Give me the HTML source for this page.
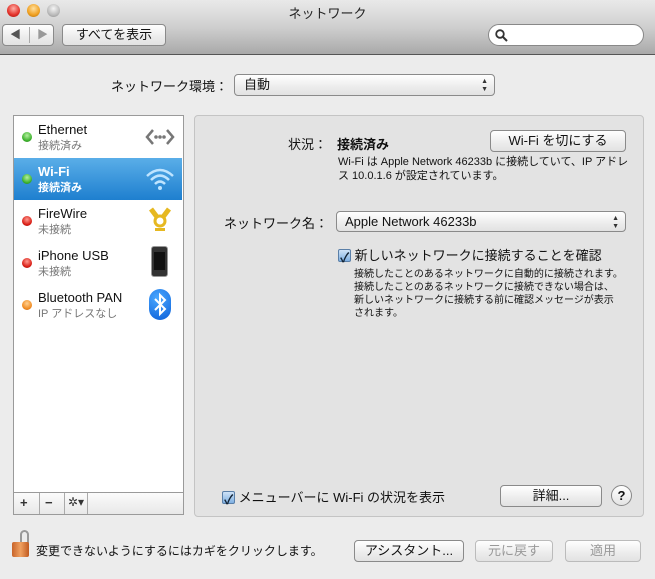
<!DOCTYPE html>
<html><head><meta charset="utf-8"><style>
*{margin:0;padding:0;box-sizing:border-box}
body{width:655px;height:579px;background:#ececec;font-family:"Liberation Sans","Noto Sans CJK JP",sans-serif;font-size:13px;color:#111;position:relative;overflow:hidden}
.a{position:absolute}
.tb{left:0;top:0;width:655px;height:55px;background:linear-gradient(#e9e9e9,#cfcfcf 50%,#a9a9a9);border-bottom:1px solid #555}
.btn{position:absolute;border:1px solid #8a8a8a;border-radius:4px;background:linear-gradient(#fff,#ececec 60%,#e2e2e2);text-align:center;font-size:13px;line-height:20px}
.dot{position:absolute;width:10px;height:10px;border-radius:50%;left:8px}
.row{position:absolute;left:0;width:168px;height:42px}
.n{position:absolute;left:24px;top:6px;font-size:13px}
.s{position:absolute;left:24px;top:21px;font-size:11px;color:#777}
.cb{display:inline-block;width:13px;height:13px;border:1px solid #5a7fa8;border-radius:2px;background:linear-gradient(#cfe3f7,#7fb0e2);vertical-align:-2px;position:relative}
</style></head><body>
<div class="a tb"></div>
<div class="a dot" style="left:7px;top:4px;width:13px;height:13px;background:radial-gradient(circle at 50% 35%,#ffb0a8,#e3322a 60%,#9b1a14)"></div>
<div class="a dot" style="left:27px;top:4px;width:13px;height:13px;background:radial-gradient(circle at 50% 35%,#ffe0a0,#f0a020 60%,#a86a10)"></div>
<div class="a dot" style="left:47px;top:4px;width:13px;height:13px;background:radial-gradient(circle at 50% 35%,#f5f5f5,#bbb 60%,#888)"></div>
<div class="a" style="left:0;top:3px;width:655px;text-align:center;font-size:13px;color:#222">ネットワーク</div>
<div class="btn" style="left:2px;top:24px;width:52px;height:22px;color:#555;font-size:11px"><span style="position:absolute;left:7px">◀</span><span style="position:absolute;left:26px;top:2px;height:16px;border-left:1px solid #aaa"></span><span style="position:absolute;left:34px;color:#999">▶</span></div>
<div class="btn" style="left:62px;top:24px;width:104px;height:22px">すべてを表示</div>
<div class="a" style="left:488px;top:24px;width:156px;height:22px;border:1px solid #888;border-radius:11px;background:#fff"><svg class="a" style="left:6px;top:4px" width="13" height="13"><circle cx="5" cy="5" r="3.8" fill="none" stroke="#333" stroke-width="1.8"/><line x1="8" y1="8" x2="12" y2="12" stroke="#333" stroke-width="2"/></svg></div>
<div class="a" style="left:111px;top:76px">ネットワーク環境：</div>
<div class="btn" style="left:234px;top:74px;width:261px;height:22px;text-align:left;padding-left:9px">自動<span style="position:absolute;right:6px;top:0;font-size:7px;line-height:8px;top:3px;color:#333">▲<br>▼</span></div>

<div class="a" style="left:13px;top:115px;width:171px;height:400px;border:1px solid #9a9a9a;background:#fff">
<div class="row" style="top:0"><div class="dot" style="top:16px;background:radial-gradient(circle at 50% 35%,#b5f0a0,#3ab12a 65%,#1d6a12)"></div><div class="n">Ethernet</div><div class="s">接続済み</div><svg class="a" style="left:130px;top:8px" width="32" height="26"><path d="M9 6 L3 13 L9 20 M23 6 L29 13 L23 20" fill="none" stroke="#777" stroke-width="2.5"/><circle cx="12" cy="13" r="1.8" fill="#777"/><circle cx="16" cy="13" r="1.8" fill="#777"/><circle cx="20" cy="13" r="1.8" fill="#777"/></svg></div>
<div class="row" style="top:42px;background:linear-gradient(#5aaee8,#1e7fcf);color:#fff"><div class="dot" style="top:16px;background:radial-gradient(circle at 50% 35%,#b5f0a0,#3ab12a 65%,#1d6a12)"></div><div class="n" style="font-weight:bold">Wi-Fi</div><div class="s" style="color:#fff;font-weight:bold">接続済み</div><svg class="a" style="left:130px;top:6px" width="32" height="30"><path d="M3 12 Q16 0 29 12 M7 16 Q16 7 25 16 M11 20 Q16 15 21 20" fill="none" stroke="#bfe4ff" stroke-width="2.5"/><circle cx="16" cy="24" r="2" fill="#bfe4ff"/></svg></div>
<div class="row" style="top:84px"><div class="dot" style="top:16px;background:radial-gradient(circle at 50% 35%,#ff9a90,#d81a12 65%,#7a0e08)"></div><div class="n">FireWire</div><div class="s">未接続</div><svg class="a" style="left:132px;top:4px" width="28" height="32"><path d="M5 5 L11 13 M23 5 L17 13" stroke="#e6b820" stroke-width="5"/><circle cx="14" cy="17" r="5" fill="none" stroke="#e6b820" stroke-width="3"/><rect x="9" y="24" width="10" height="3" fill="#e6b820"/></svg></div>
<div class="row" style="top:126px"><div class="dot" style="top:16px;background:radial-gradient(circle at 50% 35%,#ff9a90,#d81a12 65%,#7a0e08)"></div><div class="n">iPhone USB</div><div class="s">未接続</div><div class="a" style="left:137px;top:4px;width:17px;height:31px;border-radius:3px;background:#333;border:1px solid #999"><div class="a" style="left:2px;top:5px;width:11px;height:18px;background:#111"></div></div></div>
<div class="row" style="top:168px"><div class="dot" style="top:16px;background:radial-gradient(circle at 50% 35%,#ffd090,#f08a20 65%,#9a4a08)"></div><div class="n">Bluetooth PAN</div><div class="s">IP アドレスなし</div><div class="a" style="left:135px;top:5px;width:22px;height:31px;border-radius:11px;background:radial-gradient(circle at 40% 30%,#4aa8ff,#0a5ed8)"><svg width="22" height="31"><path d="M6 10 L16 20 L11 25 L11 6 L16 11 L6 21" fill="none" stroke="#fff" stroke-width="2"/></svg></div></div>
<div class="a" style="left:0;bottom:0;width:169px;height:22px;border-top:1px solid #9a9a9a;background:linear-gradient(#fbfbfb,#e8e8e8);font-size:13px;color:#333">
<span class="a" style="left:6px;top:2px;font-weight:bold">+</span><span class="a" style="left:25px;top:0;height:21px;border-left:1px solid #aaa"></span>
<span class="a" style="left:31px;top:2px;font-weight:bold">−</span><span class="a" style="left:50px;top:0;height:21px;border-left:1px solid #aaa"></span>
<span class="a" style="left:54px;top:2px;font-size:12px">✲▾</span><span class="a" style="left:73px;top:0;height:21px;border-left:1px solid #aaa"></span></div>
</div>

<div class="a" style="left:194px;top:115px;width:450px;height:402px;border:1px solid #c4c4c4;border-radius:4px;background:#e3e3e3"></div>
<div class="a" style="left:288px;top:134px">状況：</div>
<div class="a" style="left:337px;top:134px;font-weight:bold">接続済み</div>
<div class="btn" style="left:490px;top:130px;width:136px;height:22px;font-size:13px">Wi-Fi を切にする</div>
<div class="a" style="left:338px;top:155px;font-size:11px;line-height:14px;width:300px">Wi-Fi は Apple Network 46233b に接続していて、IP アドレス 10.0.1.6 が設定されています。</div>
<div class="a" style="left:224px;top:213px">ネットワーク名：</div>
<div class="btn" style="left:336px;top:211px;width:290px;height:21px;text-align:left;padding-left:8px">Apple Network 46233b<span style="position:absolute;right:6px;top:3px;font-size:7px;line-height:8px;color:#333">▲<br>▼</span></div>
<div class="a" style="left:338px;top:245px"><span class="cb"><span class="a" style="left:1px;top:-3px;font-size:13px;color:#123;font-weight:bold">✓</span></span> 新しいネットワークに接続することを確認</div>
<div class="a" style="left:354px;top:268px;font-size:10px;line-height:13px;width:275px">接続したことのあるネットワークに自動的に接続されます。<br>接続したことのあるネットワークに接続できない場合は、<br>新しいネットワークに接続する前に確認メッセージが表示<br>されます。</div>
<div class="a" style="left:222px;top:487px"><span class="cb"><span class="a" style="left:1px;top:-3px;font-size:13px;color:#123;font-weight:bold">✓</span></span> メニューバーに Wi-Fi の状況を表示</div>
<div class="btn" style="left:500px;top:485px;width:102px;height:22px">詳細...</div>
<div class="a" style="left:611px;top:485px;width:21px;height:21px;border:1px solid #888;border-radius:50%;background:linear-gradient(#fff,#e4e4e4);text-align:center;line-height:19px;font-weight:bold;font-size:13px">?</div>

<div class="a" style="left:12px;top:530px;width:17px;height:27px"><div class="a" style="left:8px;top:0;width:9px;height:13px;border:2px solid #999;border-bottom:none;border-radius:5px 5px 0 0"></div><div class="a" style="left:0;top:12px;width:17px;height:15px;border-radius:2px;background:linear-gradient(90deg,#c8642a,#f0a060,#c05a20)"></div></div>
<div class="a" style="left:36px;top:542px;font-size:12px">変更できないようにするにはカギをクリックします。</div>
<div class="btn" style="left:354px;top:540px;width:110px;height:22px">アシスタント...</div>
<div class="btn" style="left:475px;top:540px;width:78px;height:22px;color:#999;border-color:#bbb">元に戻す</div>
<div class="btn" style="left:565px;top:540px;width:76px;height:22px;color:#999;border-color:#bbb">適用</div>
</body></html>
